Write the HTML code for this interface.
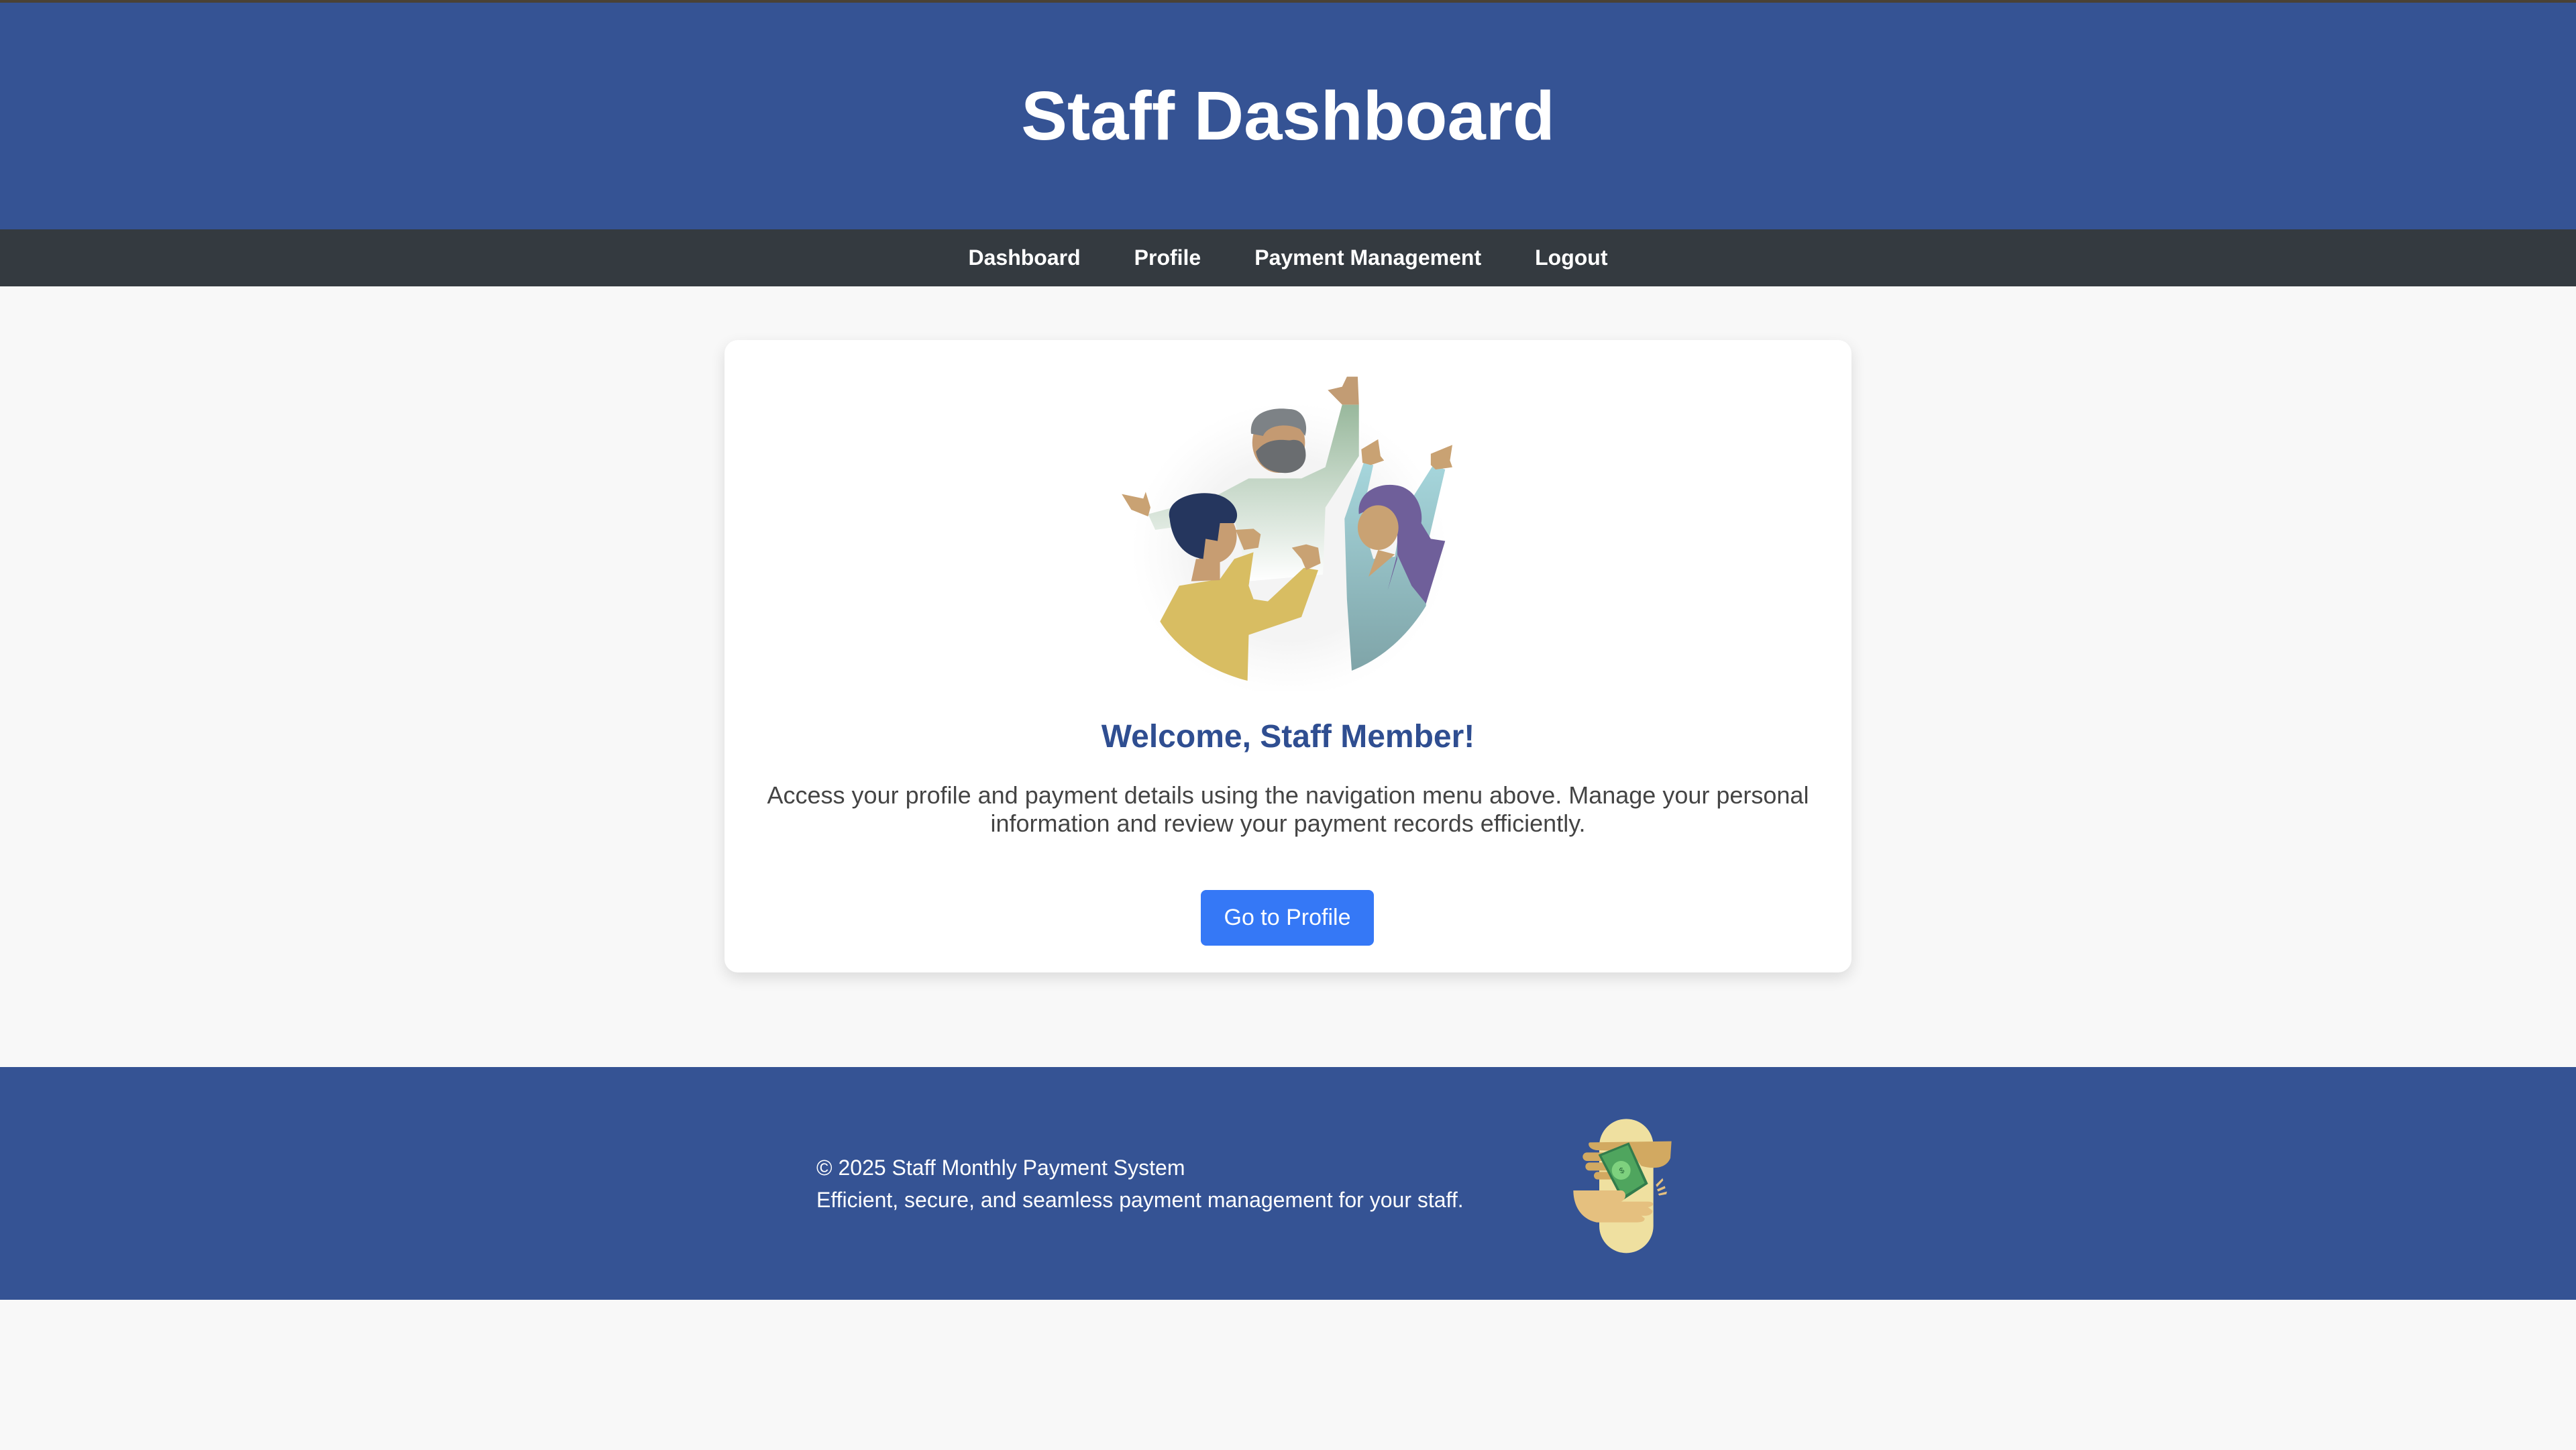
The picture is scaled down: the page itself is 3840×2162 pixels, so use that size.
<!DOCTYPE html>
<html><head><meta charset="utf-8"><style>
*{margin:0;padding:0;box-sizing:border-box}
html,body{width:3840px;height:2162px;background:#f8f8f8;font-family:"Liberation Sans",Arial,sans-serif;overflow:hidden;position:relative}
.top{position:absolute;left:0;top:0;width:3840px;height:4px;background:#4a4236}
header{position:absolute;left:0;top:4px;width:3840px;height:338px;background:#355394;color:#fff;text-align:center}
header h1{font-size:103px;font-weight:bold;line-height:338px;margin-top:0px}
nav{position:absolute;left:0;top:342px;width:3840px;height:85px;background:#343a40;display:flex;justify-content:center;align-items:center}
nav a{color:#fff;font-weight:bold;font-size:32px;text-decoration:none;margin:0 40px}
.card{position:absolute;left:1080px;top:507px;width:1680px;height:943px;background:#fff;border-radius:20px;box-shadow:0 8px 22px rgba(0,0,0,0.12);text-align:center}
.wel{position:absolute;left:0;top:564px;width:100%;font-size:48px;font-weight:bold;color:#2f4e91}
.par{position:absolute;left:60px;top:658px;width:1560px;font-size:36px;line-height:42px;color:#444}
.btn{position:absolute;left:710px;top:820px;width:258px;height:83px;background:#3578f6;border-radius:8px;color:#fff;font-size:34px;line-height:83px}
footer{position:absolute;left:0;top:1591px;width:3840px;height:347px;background:#355394;color:#fff}
.ft{position:absolute;left:1217px;top:126px;font-size:32px;line-height:48px}
</style></head><body>
<div class="top"></div>
<header><h1>Staff Dashboard</h1></header>
<nav><a>Dashboard</a><a>Profile</a><a>Payment Management</a><a>Logout</a></nav>
<div class="card">
<div class="wel">Welcome, Staff Member!</div>
<div class="par">Access your profile and payment details using the navigation menu above. Manage your personal information and review your payment records efficiently.</div>
<div class="btn">Go to Profile</div>
</div>
<svg style="position:absolute;left:1640px;top:540px" width="560" height="490" viewBox="0 0 1568 1470" preserveAspectRatio="none">
<defs>
<linearGradient id="g1" x1="0" y1="0" x2="0" y2="1"><stop offset="0" stop-color="#98b89c"/><stop offset="1" stop-color="#ffffff"/></linearGradient>
<linearGradient id="g2" x1="0" y1="0" x2="0" y2="1"><stop offset="0" stop-color="#a6d6dc"/><stop offset="1" stop-color="#7fa4a8"/></linearGradient>
<radialGradient id="dots"><stop offset="0.6" stop-color="#e8e8e8" stop-opacity="0.5"/><stop offset="1" stop-color="#f0f0f0" stop-opacity="0"/></radialGradient>
</defs>
<circle cx="790" cy="840" r="660" fill="url(#dots)"/>
<path d="M200,680 L480,600 L620,520 L840,520 L940,470 L1010,190 L1080,190 L1080,420 L940,650 L930,950 L620,980 L560,700 L230,750 Z" fill="url(#g1)"/>
<path d="M950,125 L1010,110 L1030,65 L1075,65 L1080,190 L1010,190 Z" fill="#c29c74"/>
<path d="M90,590 L180,610 L190,580 L210,650 L200,690 L130,660 Z" fill="#c9a273"/>
<ellipse cx="745" cy="360" rx="110" ry="135" fill="#c49a72"/>
<path d="M630,320 C620,220 720,200 790,210 C850,210 870,280 855,330 L835,300 C780,270 700,280 680,330 Z" fill="#7d8286"/>
<path d="M650,400 C680,360 720,340 790,350 C830,340 860,360 858,420 C855,480 800,500 760,495 C700,490 660,460 650,400Z" fill="#6a6d70"/>
<path d="M250,1160 L330,1000 L500,970 L560,880 L640,850 L620,1000 L640,1060 L700,1070 L850,920 L910,930 L840,1140 L620,1220 L615,1425 C450,1380 320,1280 250,1160Z" fill="#d8bd62"/>
<path d="M565,750 L640,745 L670,770 L660,830 L600,840 Z" fill="#c9a273"/>
<path d="M800,830 L860,815 L910,830 L920,900 L860,930 L840,880 Z" fill="#c9a273"/>
<ellipse cx="470" cy="780" rx="100" ry="120" fill="#c79d72"/>
<path d="M380,980 L400,880 L500,880 L500,975 Z" fill="#c79d72"/>
<path d="M290,700 C270,620 380,570 480,590 C560,610 590,680 560,720 L500,720 L490,800 L440,790 L430,880 C350,870 300,800 290,700Z" fill="#25365e"/>
<path d="M1050,1380 L1030,1060 L1020,700 L1100,450 L1140,460 L1090,700 L1140,880 L1230,870 L1260,680 L1390,460 L1440,480 L1370,800 L1360,1090 C1280,1230 1170,1330 1050,1380Z" fill="url(#g2)"/>
<path d="M1090,390 L1160,345 L1170,420 L1185,440 L1130,460 L1095,450Z" fill="#c9a273"/>
<path d="M1380,410 L1470,370 L1460,440 L1470,470 L1400,480 L1380,460Z" fill="#c9a273"/>
<path d="M1080,680 C1070,590 1150,540 1230,550 C1320,560 1350,660 1340,720 L1380,790 L1440,800 L1360,1080 L1300,1000 L1240,860 L1200,1020 L1240,880 L1240,710 C1200,650 1110,660 1080,680Z" fill="#6f5f9a"/>
<ellipse cx="1160" cy="740" rx="85" ry="100" fill="#c9a273"/>
<path d="M1120,960 L1160,840 L1230,860 Z" fill="#c9a273"/>
</svg>
<footer>
<div class="ft">© 2025 Staff Monthly Payment System<br>Efficient, secure, and seamless payment management for your staff.</div>
</footer>
<svg style="position:absolute;left:2330px;top:1660px" width="180" height="220" viewBox="0 0 540 660">
<rect x="162" y="25" width="242" height="600" rx="121" fill="#efe0a0"/>
<path d="M120,130 L485,125 L480,200 C460,250 400,250 350,235 L300,170 L150,165 C110,160 110,130 120,130Z" fill="#d2a961"/>
<rect x="88" y="175" width="170" height="38" rx="19" fill="#d2a961"/>
<rect x="100" y="220" width="160" height="36" rx="18" fill="#d2a961"/>
<rect x="138" y="262" width="130" height="34" rx="17" fill="#d2a961"/>
<path d="M158,185 L295,130 L380,315 L265,390 Z" fill="#327c4c"/>
<path d="M172,190 L290,142 L365,312 L268,372 Z" fill="#4fa55e"/>
<ellipse cx="260" cy="255" rx="42" ry="42" fill="#7ed17e"/>
<text x="262" y="268" font-size="36" font-family="Liberation Sans" fill="#2b6d3d" text-anchor="middle" transform="rotate(-25 262 255)">$</text>
<path d="M46,345 L260,345 C280,345 290,380 260,395 L380,395 C410,395 410,415 380,420 L400,435 C400,455 380,460 350,458 L365,470 C365,485 350,488 320,488 L150,488 C70,470 46,400 46,345Z" fill="#e5c07f"/>
<path d="M415,320 L445,290 L448,300 L420,330Z M420,340 L455,325 L458,335 L425,350Z M425,360 L465,350 L462,362 L430,368Z" fill="#e5c07f"/>
</svg>
</body></html>
